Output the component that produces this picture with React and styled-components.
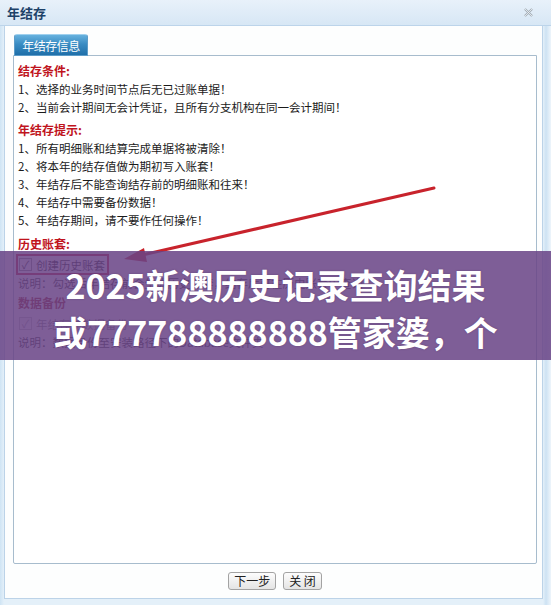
import React from "react";
import styled, { createGlobalStyle } from "styled-components";

const GlobalStyle = createGlobalStyle`
  html, body {
    margin: 0;
    padding: 0;
    background: #fff;
  }
  * {
    box-sizing: border-box;
  }
`;

const FONT = `"Noto Sans CJK SC", "Noto Sans", sans-serif`;

const conditions = [
  "1、选择的业务时间节点后无已过账单据！",
  "2、当前会计期间无会计凭证，且所有分支机构在同一会计期间！",
];

const tips = [
  "1、所有明细账和结算完成单据将被清除！",
  "2、将本年的结存值做为期初写入账套！",
  "3、年结存后不能查询结存前的明细账和往来！",
  "4、年结存中需要备份数据！",
  "5、年结存期间，请不要作任何操作！",
];

function App() {
  return (
    <>
      <GlobalStyle />
      <Dialog>
        <TitleBar>
          <Title>年结存</Title>
          <CloseIcon viewBox="0 0 10 10">
            <path d="M1 1 L9 9 M9 1 L1 9" stroke="#a3acb4" strokeWidth="2.4" />
            <path d="M1 1 L9 9 M9 1 L1 9" stroke="#eef4f9" strokeWidth="0.9" />
          </CloseIcon>
        </TitleBar>
        <Body>
          <TabStrip>
            <Tab>年结存信息</Tab>
          </TabStrip>
          <Panel>
            <Heading>结存条件:</Heading>
            {conditions.map((line) => (
              <Line key={line}>{line}</Line>
            ))}
            <Heading $gap={5}>年结存提示:</Heading>
            {tips.map((line) => (
              <Line key={line}>{line}</Line>
            ))}
            <Heading $gap={6}>历史账套:</Heading>
            <CheckRow $marked>
              <Box>✓</Box>
              创建历史账套
            </CheckRow>
            <Note>说明：勾选后年结存前会生成历史账套，结存后可在历史账套中查询</Note>
            <Heading $gap={2} $plain>数据备份</Heading>
            <CheckRow $disabled>
              <Box $disabled>✓</Box>
              年结存前数据备份
            </CheckRow>
            <Note>说明：数据备份至安装路径下的Database文件夹</Note>
          </Panel>
          <ButtonRow>
            <Button>下一步</Button>
            <Button>关 闭</Button>
          </ButtonRow>
        </Body>

        <Arrow viewBox="0 0 551 605">
          <line x1="434" y1="188" x2="138" y2="256" stroke="#c8232c" strokeWidth="3" strokeLinecap="round" />
          <polygon points="124,259 144,248 147,262" fill="#c8232c" />
        </Arrow>

        <Banner>
          <BannerLine>2025新澳历史记录查询结果</BannerLine>
          <BannerLine>或777788888888管家婆，个</BannerLine>
        </Banner>
      </Dialog>
    </>
  );
}

const Dialog = styled.div`
  position: relative;
  width: 551px;
  height: 605px;
  display: flex;
  flex-direction: column;
  padding: 0 8px 6px 4px;
  background: linear-gradient(90deg, #cfe4f4 0, #e4f0f9 4px, #e4f0f9 calc(100% - 8px), #cde2f3 calc(100% - 5px), #eef5fb 100%);
  font-family: ${FONT};
  overflow: hidden;
`;

const TitleBar = styled.div`
  height: 26px;
  margin: 0 -8px 0 -4px;
  padding: 0 18px 0 7px;
  display: flex;
  align-items: center;
  justify-content: space-between;
  background: linear-gradient(#e8f1fa, #d7e7f5);
  border-bottom: 1px solid #bcd4ea;
`;

const Title = styled.div`
  font-size: 13px;
  font-weight: 700;
  color: #1d4168;
`;

const CloseIcon = styled.svg`
  width: 9px;
  height: 9px;
`;

const Body = styled.div`
  flex: 1;
  display: flex;
  flex-direction: column;
  background: #fdfefe;
  border: 1px solid #bcd3e8;
  border-top: none;
  padding: 8px 5px 0 8px;
`;

const TabStrip = styled.div`
  display: flex;
  height: 21px;
  padding-left: 1px;
`;

const Tab = styled.div`
  width: 74px;
  height: 22px;
  display: flex;
  align-items: center;
  justify-content: center;
  font-size: 12px;
  color: #fff;
  letter-spacing: -0.5px;
  background: linear-gradient(#66b1de, #3a8cc3 45%, #1f6fa9);
  border: 1px solid #5d9cc8;
  border-top-color: #9fd0ee;
  border-radius: 3px 3px 0 0;
  position: relative;
  z-index: 1;
`;

const Panel = styled.div`
  flex: 1;
  border: 1px solid #a7bccd;
  border-radius: 0 0 2px 2px;
  background: #fff;
  padding: 6px 4px 0 4px;
  display: flex;
  flex-direction: column;
  align-items: flex-start;
  font-size: 11.5px;
  color: #1b1b1b;
`;

const Heading = styled.div`
  margin-top: ${(p) => p.$gap || 0}px;
  line-height: 18px;
  font-size: 12px;
  font-weight: 700;
  color: ${(p) => (p.$plain ? "#9c1822" : "#c0141d")};
`;

const Line = styled.div`
  line-height: 18px;
  white-space: nowrap;
`;

const CheckRow = styled.div`
  margin: 1px 0 0 -2px;
  height: 21px;
  display: inline-flex;
  align-items: center;
  gap: 4px;
  padding: 0 2px 0 1px;
  font-size: 11.5px;
  color: ${(p) => (p.$disabled ? "#8a8a8a" : "#1b1b1b")};
  border: 2px solid ${(p) => (p.$marked ? "#c31b34" : "transparent")};
`;

const Box = styled.span`
  width: 13px;
  height: 13px;
  display: inline-flex;
  align-items: center;
  justify-content: center;
  font-size: 11px;
  line-height: 1;
  color: ${(p) => (p.$disabled ? "#a8a8a8" : "#333")};
  border: 1px solid ${(p) => (p.$disabled ? "#c4c4c4" : "#8b8b8b")};
  background: linear-gradient(#f4f4f4, #fff);
`;

const Note = styled.div`
  line-height: 17px;
  color: #333;
  white-space: nowrap;
`;

const ButtonRow = styled.div`
  height: 34px;
  display: flex;
  align-items: center;
  justify-content: center;
  gap: 7px;
`;

const Button = styled.button`
  height: 18px;
  padding: 0 5px;
  font-family: ${FONT};
  font-size: 12px;
  line-height: 16px;
  color: #222;
  background: linear-gradient(#fdfdfd, #e4e4e4);
  border: 1px solid #a3a3a3;
  border-radius: 3px;
`;

const Arrow = styled.svg`
  position: absolute;
  left: 0;
  top: 0;
  width: 551px;
  height: 605px;
  pointer-events: none;
`;

const Banner = styled.div`
  position: absolute;
  left: 0;
  right: 0;
  top: 251px;
  height: 109px;
  padding-top: 10px;
  background: rgba(105, 67, 134, 0.86);
  display: flex;
  flex-direction: column;
  align-items: center;
  overflow: hidden;
`;

const BannerLine = styled.div`
  font-family: ${FONT};
  font-size: 34px;
  font-weight: 700;
  line-height: 47px;
  color: #fff;
  white-space: nowrap;
  text-shadow: 0 0 2px rgba(60, 30, 80, 0.4);
`;

export default App;
